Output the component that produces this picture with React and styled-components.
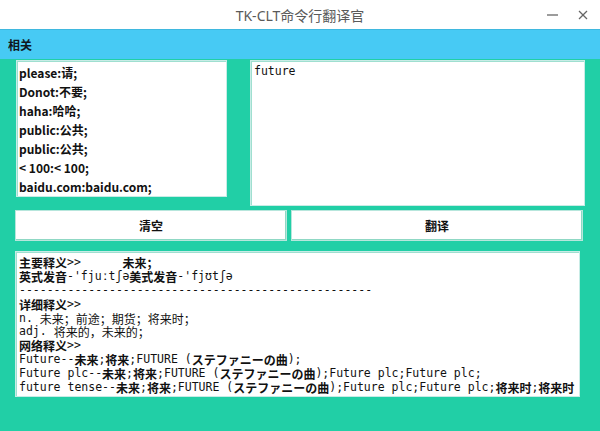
import React from "react";
import styled, { createGlobalStyle } from "styled-components";

const Global = createGlobalStyle`
  html, body {
    margin: 0;
    padding: 0;
    background: #21cfa6;
  }
  * {
    box-sizing: border-box;
  }
`;

const Window = styled.div`
  width: 600px;
  height: 431px;
  display: flex;
  flex-direction: column;
  background: #21cfa6;
  overflow: hidden;
`;

const TitleBar = styled.div`
  height: 29px;
  background: #ffffff;
  display: flex;
  align-items: center;
  justify-content: center;
  position: relative;
  font-family: "Noto Sans", "Noto Sans CJK SC", sans-serif;
  font-size: 14px;
  color: #5a5a5a;
`;

const WinButtons = styled.div`
  position: absolute;
  right: 12px;
  top: 0;
  height: 29px;
  display: flex;
  align-items: center;
  gap: 20px;
  color: #666;
`;

const MenuBar = styled.div`
  height: 30px;
  background: #47caf4;
  display: flex;
  align-items: center;
  padding-left: 8px;
  font-family: "Noto Sans CJK SC", sans-serif;
  font-weight: 700;
  font-size: 12px;
  color: #101820;
  border-top: 1px solid #3fb8df;
`;

const Content = styled.div`
  padding: 1px 0 0 15px;
  display: flex;
  flex-direction: column;
`;

const TopRow = styled.div`
  display: flex;
  align-items: flex-start;
`;

const Box = styled.div`
  background: #ffffff;
  border: 1px solid #c8ece6;
  box-shadow: inset 1px 1px 0 #9fdfd0;
`;

const ListBox = styled(Box)`
  margin-left: 1px;
  width: 211px;
  height: 137px;
  padding: 2px 0 0 2px;
  font-family: "Noto Sans CJK SC", sans-serif;
  font-weight: 700;
  font-size: 12px;
  line-height: 19px;
  color: #111;
`;

const InputBox = styled(Box)`
  margin-left: 23px;
  width: 335px;
  height: 146px;
  padding: 3px 0 0 3px;
  font-family: "DejaVu Sans Mono", "Noto Sans CJK SC", monospace;
  font-size: 11.5px;
  color: #111;
`;

const ButtonRow = styled.div`
  display: flex;
  gap: 4px;
  margin-top: 4px;
`;

const Button = styled.div`
  width: ${(p) => p.$w}px;
  height: 31px;
  background: #ffffff;
  border: 1px solid #b7e6dc;
  box-shadow: inset -1px -1px 0 #8fd8c4;
  display: flex;
  align-items: center;
  justify-content: center;
  font-family: "Noto Sans CJK SC", sans-serif;
  font-weight: 700;
  font-size: 12px;
  color: #111;
`;

const Output = styled(Box)`
  margin-top: 10px;
  width: 565px;
  height: 146px;
  padding: 4px 0 0 3px;
  font-family: "DejaVu Sans Mono", "Noto Sans CJK SC", monospace;
  font-size: 11.5px;
  color: #111;
  white-space: pre;
  overflow: hidden;
`;

const Line = styled.div`
  height: 13.9px;
  line-height: 13.9px;
  display: flex;
  align-items: center;
`;

const Cjk = styled.span`
  font-family: "Noto Sans CJK SC", sans-serif;
  font-size: 12px;
  font-weight: ${(p) => (p.$bold ? 700 : 400)};
`;

const listItems = [
  "please:请;",
  "Donot:不要;",
  "haha:哈哈;",
  "public:公共;",
  "public:公共;",
  "< 100:< 100;",
  "baidu.com:baidu.com;",
];

export default function App() {
  return (
    <>
      <Global />
      <Window>
        <TitleBar>
          TK-CLT命令行翻译官
          <WinButtons>
            <svg width="11" height="11" viewBox="0 0 11 11">
              <line x1="0" y1="6" x2="11" y2="6" stroke="#666" strokeWidth="1.3" />
            </svg>
            <svg width="10" height="10" viewBox="0 0 10 10">
              <line x1="1" y1="1" x2="9" y2="9" stroke="#666" strokeWidth="1.3" />
              <line x1="9" y1="1" x2="1" y2="9" stroke="#666" strokeWidth="1.3" />
            </svg>
          </WinButtons>
        </TitleBar>
        <MenuBar>相关</MenuBar>
        <Content>
          <TopRow>
            <ListBox>
              {listItems.map((t, i) => (
                <div key={i}>{t}</div>
              ))}
            </ListBox>
            <InputBox>future</InputBox>
          </TopRow>
          <ButtonRow>
            <Button $w={272}>清空</Button>
            <Button $w={292}>翻译</Button>
          </ButtonRow>
          <Output>
            <Line><Cjk $bold>主要释义</Cjk>{">>      "}<Cjk $bold>未来；</Cjk></Line>
            <Line><Cjk $bold>英式发音</Cjk>{"-'fjuːtʃə"}<Cjk $bold>美式发音</Cjk>{"-'fjʊtʃə"}</Line>
            <Line>{"-".repeat(51)}</Line>
            <Line><Cjk $bold>详细释义</Cjk>{">>"}</Line>
            <Line>{"n. "}<Cjk>未来；前途；期货；将来时；</Cjk></Line>
            <Line>{"adj. "}<Cjk>将来的，未来的；</Cjk></Line>
            <Line><Cjk $bold>网络释义</Cjk>{">>"}</Line>
            <Line>{"Future--"}<Cjk $bold>未来</Cjk>{";"}<Cjk $bold>将来</Cjk>{";FUTURE ("}<Cjk $bold>ステファニーの曲</Cjk>{");"}</Line>
            <Line>{"Future plc--"}<Cjk $bold>未来</Cjk>{";"}<Cjk $bold>将来</Cjk>{";FUTURE ("}<Cjk $bold>ステファニーの曲</Cjk>{");Future plc;Future plc;"}</Line>
            <Line>{"future tense--"}<Cjk $bold>未来</Cjk>{";"}<Cjk $bold>将来</Cjk>{";FUTURE ("}<Cjk $bold>ステファニーの曲</Cjk>{");Future plc;Future plc;"}<Cjk $bold>将来时</Cjk>{";"}<Cjk $bold>将来时</Cjk></Line>
          </Output>
        </Content>
      </Window>
    </>
  );
}
